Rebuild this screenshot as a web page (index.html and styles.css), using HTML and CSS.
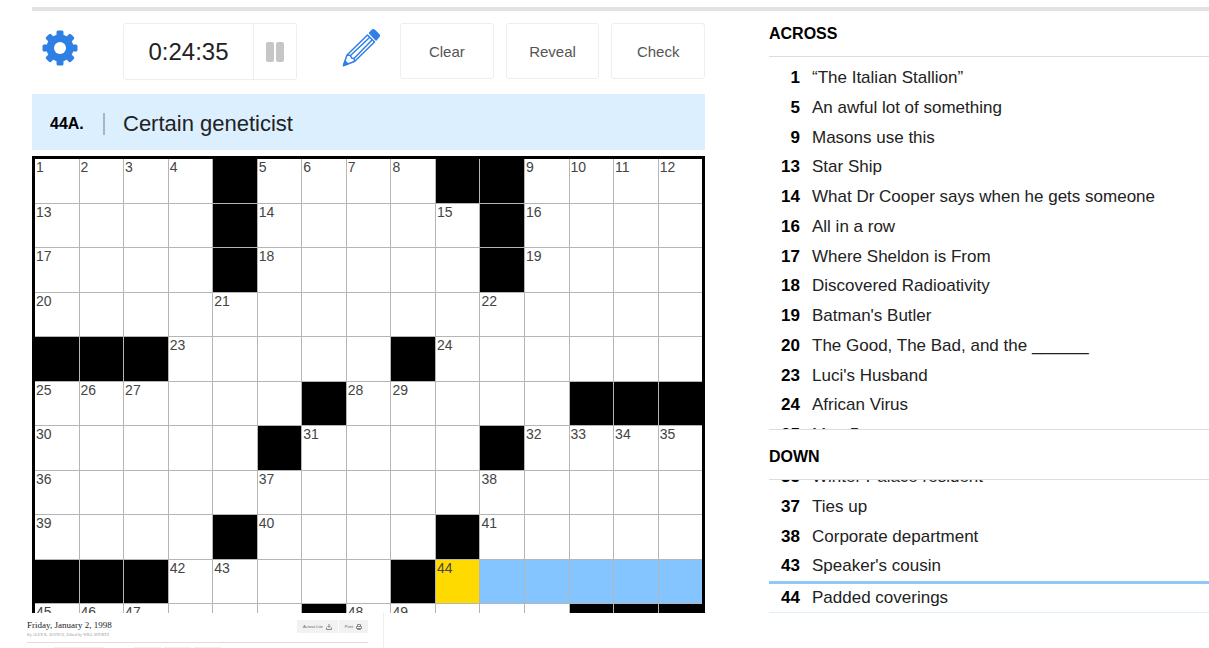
FILE: index.html
```html
<!DOCTYPE html>
<html lang="en">
<head>
<meta charset="utf-8">
<title>Crossword</title>
<link rel="stylesheet" href="styles.css">
</head>
<body>
<main class="game">
  <section class="puzzle">
    <div class="toolbar">
      <button class="icon-button settings" aria-label="Settings">
        <svg viewBox="0 0 36 36" width="36" height="36"><g fill="#2f80e4"><g id="teeth"><rect x="14.500" y="0.500" width="7" height="35" rx="1.500"/><rect x="0.500" y="14.500" width="35" height="7" rx="1.500"/></g><use href="#teeth" transform="rotate(45 18 18)"/><circle cx="18" cy="18" r="13.500"/></g><circle cx="18" cy="18" r="6" fill="#fff"/></svg>
      </button>
      <div class="timer">
        <span class="time">0:24:35</span>
        <button class="pause" aria-label="Pause">
          <svg viewBox="0 0 18 20" width="18" height="20" fill="#c6c6c6"><rect width="8" height="20" rx="2"/><rect x="10" width="8" height="20" rx="2"/></svg>
        </button>
      </div>
      <button class="icon-button pencil" aria-label="Pencil">
        <svg viewBox="0 0 38 38" width="38" height="38" fill="none" stroke="#2f80e4" stroke-width="1.500" stroke-linejoin="round"><path d="M1.500 36.500 5 26 25.500 6 32.500 13 12.500 32.500Z"/><path d="M5 26 8.500 26.500 9.500 29 12 29.500 12.500 32.500M8.500 26.500 27.800 8.300M12 29.500 30.200 10.700"/><path d="M1.500 36.500 3 32 6 35Z" fill="#2f80e4"/><path d="M27.500 4 30.500 1Q31.500.5 32.500 1.300L37 5.800Q37.500 6.800 36.800 7.800L34 11Z" fill="#2f80e4"/></svg>
      </button>
      <button class="action">Clear</button>
      <button class="action">Reveal</button>
      <button class="action">Check</button>
    </div>
    <div class="current-clue"><b class="current-number">44A.</b><span class="current-text">Certain geneticist</span></div>
    <div class="board" id="board"></div>
  </section>
  <aside class="clues">
    <section class="across">
      <h2>ACROSS</h2>
      <ol class="clue-list">
        <li><b>1</b><span>“The Italian Stallion”</span></li>
        <li><b>5</b><span>An awful lot of something</span></li>
        <li><b>9</b><span>Masons use this</span></li>
        <li><b>13</b><span>Star Ship</span></li>
        <li><b>14</b><span>What Dr Cooper says when he gets someone</span></li>
        <li><b>16</b><span>All in a row</span></li>
        <li><b>17</b><span>Where Sheldon is From</span></li>
        <li><b>18</b><span>Discovered Radioativity</span></li>
        <li><b>19</b><span>Batman's Butler</span></li>
        <li><b>20</b><span>The Good, The Bad, and the ______</span></li>
        <li><b>23</b><span>Luci's Husband</span></li>
        <li><b>24</b><span>African Virus</span></li>
        <li><b>25</b><span>Man 5</span></li>
      </ol>
    </section>
    <section class="down">
      <h2>DOWN</h2>
      <ol class="clue-list">
        <li><b>35</b><span>Winter Palace resident</span></li>
        <li><b>37</b><span>Ties up</span></li>
        <li><b>38</b><span>Corporate department</span></li>
        <li><b>43</b><span>Speaker's cousin</span></li>
        <li class="selected"><b>44</b><span>Padded coverings</span></li>
      </ol>
    </section>
  </aside>
</main>
<footer class="preview">
  <div class="preview-head">
    <div>
      <p class="date">Friday, January 2, 1998</p>
      <p class="byline">By ALEX K. JUSTICE, Edited by WILL SHORTZ</p>
    </div>
    <div class="preview-actions">
      <button>Across Lite <svg viewBox="0 0 6 6" width="6" height="6" fill="none" stroke="#888"><path d="M3 0v3M1.500 2 3 3.500 4.500 2M.5 3.500v2h5v-2"/></svg></button>
      <button>Print <svg viewBox="0 0 6 6" width="6" height="6" fill="none" stroke="#888"><path d="M1.500 2V.5h3V2M.5 2.500h5v2h-5zM1.500 4v1.500h3V4"/></svg></button>
    </div>
  </div>
  <div class="preview-tools"><i></i><i></i><i></i><i></i></div>
</footer>
<script src="board.js"></script>
</body>
</html>
```
FILE: styles.css
```css
* { box-sizing: border-box; }
body {
  margin: 0;
  height: 100vh;
  display: flex;
  flex-direction: column;
  overflow: hidden;
  background: #fff;
  color: #222;
  font-family: "Liberation Sans", Arial, sans-serif;
}
button { font: inherit; color: inherit; background: #fff; border: 0; padding: 0; }
svg { display: block; }
.game {
  flex: 1;
  min-height: 0;
  margin: 7px 0 0 32px;
  border-top: 4px solid #e2e2e2;
  display: grid;
  grid-template-columns: 673fr 440fr;
  gap: 64px;
}
.puzzle { min-height: 0; overflow: hidden; display: flex; flex-direction: column; }
.toolbar { display: flex; align-items: flex-start; padding: 12px 0 14px; flex: none; }
.icon-button { width: 55px; height: 56px; display: grid; place-items: center; }
.settings { padding-bottom: 6px; }
.timer {
  display: flex;
  width: 174px;
  height: 57px;
  margin: 0 36px;
  border: 1px solid #eee;
  border-radius: 3px;
}
.time { flex: 1; display: grid; place-items: center; font-size: 24px; }
.pause { width: 43px; border-left: 1px solid #eee; display: grid; place-items: center; }
.pencil { padding-bottom: 7px; }
.action {
  flex: 1;
  height: 56px;
  margin-left: 12px;
  border: 1px solid #eee;
  border-radius: 3px;
  color: #555;
  font-size: 15px;
}
.current-clue {
  flex: none;
  display: flex;
  align-items: center;
  height: 56px;
  padding: 4px 18px 0;
  margin-bottom: 6px;
  background: #dcefff;
}
.current-number { width: 55px; border-right: 2px solid #a9b5be; font-size: 16px; line-height: 22px; color: #000; }
.current-text { padding-left: 18px; font-size: 22px; }
.board {
  flex: none;
  display: grid;
  grid-template-columns: repeat(15, 1fr);
  gap: 1px;
  border: 3px solid #000;
  background: #b5b5b5;
}
.cell { aspect-ratio: 1; background: #fff; padding: 0 1px; font-size: 14px; line-height: 17px; color: #444; }
.block { background: #000; }
.lit { background: #84c5ff; }
.cursor { background: #ffda00; }
.clues { min-height: 0; display: flex; flex-direction: column; }
.across, .down { display: flex; flex-direction: column; min-height: 0; }
.across { flex: 419 1 0; }
.down { flex: 183 1 0; }
h2 { margin: 0; flex: none; font-size: 16px; color: #000; border-bottom: 1px solid #ddd; }
.across h2 { line-height: 24px; padding: 11px 0 10px; }
.down h2 { line-height: 24px; padding: 15px 0 10px; }
.clue-list { flex: 1; min-height: 0; margin: 0; padding: 0; list-style: none; overflow: hidden; }
.across .clue-list { padding-top: 6px; border-bottom: 1px solid #ddd; }
.down .clue-list { display: flex; flex-direction: column; justify-content: flex-end; border-bottom: 1px solid #dcefff; }
.clue-list li { flex: none; display: flex; gap: 12px; font-size: 17px; line-height: 1.75; white-space: nowrap; }
.clue-list b { width: 31px; text-align: right; color: #000; }
.clue-list .selected { border-top: 3px solid #90c8fa; line-height: 28px; }
.preview { flex: none; height: 35px; margin-left: 27px; width: 357px; padding: 7px 15px 0 0; border-right: 1px solid #eee; font-family: "Liberation Serif", serif; }
.preview-head { display: flex; justify-content: space-between; padding-bottom: 3px; border-bottom: 1px solid #ddd; }
.preview p { margin: 0; }
.date { font-size: 9px; line-height: 10px; }
.preview .byline { font-size: 4px; line-height: 9px; color: #999; }
.preview-actions { display: flex; gap: 1px; height: 13px; font: 4px "Liberation Sans", sans-serif; color: #666; }
.preview-actions button { display: flex; align-items: center; gap: 3px; padding: 0 6px; background: #f2f2f2; }
.preview-tools { display: flex; gap: 3px; padding: 4px 0 0 27px; }
.preview-tools i { width: 27px; height: 1px; background: #eee; }
.preview-tools i:first-child { width: 50px; margin-right: 27px; }
```
FILE: board.js
```js
// "#" block, "." open, "n" numbered, "C" cursor, "s" selected word
const rows = [
  "nnnn#nnnn##nnnn",
  "n...#n...n#n...",
  "n...#n....#n...",
  "n...n.....n....",
  "###n....#n.....",
  "nnn...#nn...###",
  "n....#n...#nnnn",
  "n....n....n....",
  "n...#n...#n....",
  "###nn...#Csssss",
  "nnn...#nn...###"
];
const board = document.getElementById("board");
const classes = { "#": "block", C: "cursor", s: "lit" };
let number = 0;
for (const mark of rows.join("")) {
  const cell = document.createElement("div");
  cell.className = "cell " + (classes[mark] || "");
  if (mark === "n" || mark === "C") cell.textContent = ++number;
  board.append(cell);
}
```
